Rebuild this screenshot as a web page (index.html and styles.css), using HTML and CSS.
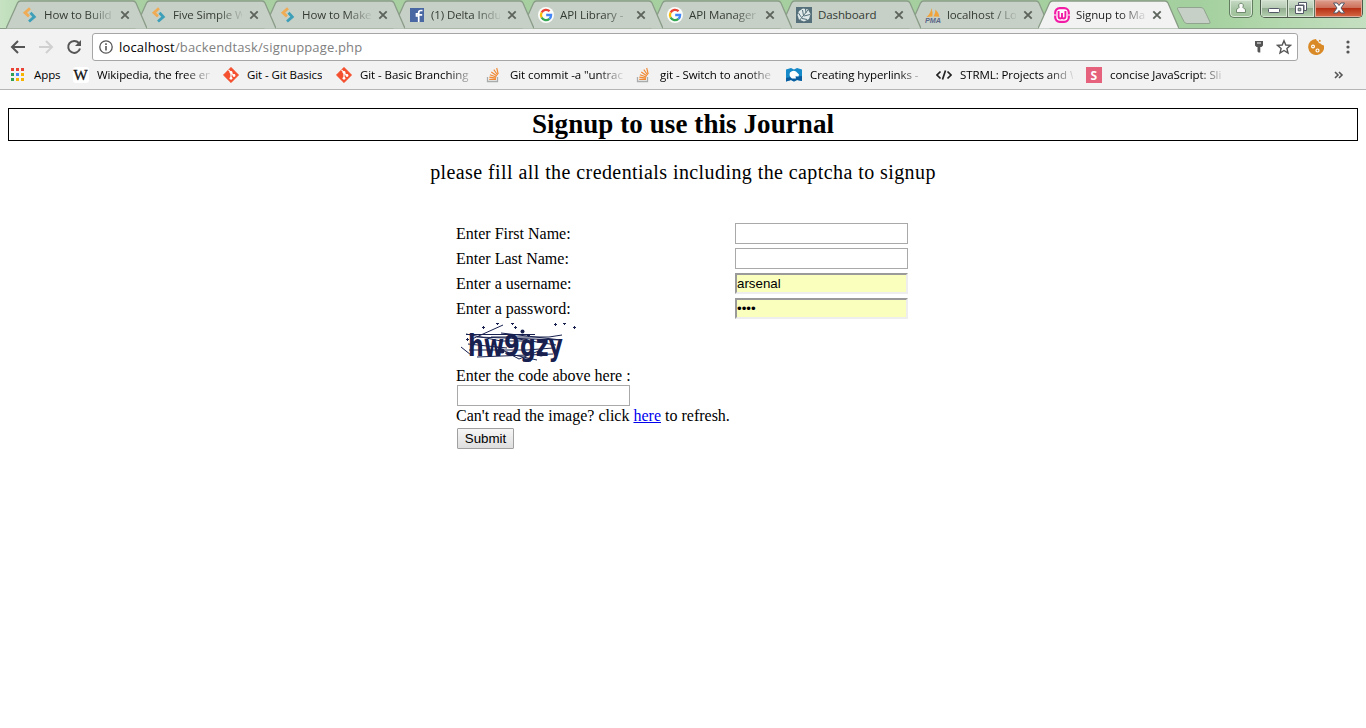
FILE: index.html
```html
<!DOCTYPE html>
<html lang="en">
<head>
<meta charset="utf-8">
<title>Signup to My Journal</title>
<link rel="stylesheet" href="styles.css">
</head>
<body>
<svg class="defs" width="0" height="0" aria-hidden="true">
  <symbol id="tab" viewBox="0 0 141 29"><path d="M0 28.500L11.500 3Q12.500 1 14.500 1H127Q129 1 130 3L141 28.500"/></symbol>
  <symbol id="x" viewBox="0 0 10 10"><path d="M1.300 1.300L8.700 8.700M8.700 1.300L1.300 8.700" stroke="currentColor" stroke-width="1.900"/></symbol>
  <symbol id="sp" viewBox="0 0 16 16"><path d="M8 1.300L3 5.800L7 9.400" fill="none" stroke="#efac54" stroke-width="2.800"/><path d="M8.500 5.800L12.300 9.800L7 14.500" fill="none" stroke="#3e9fb8" stroke-width="2.800"/></symbol>
  <symbol id="google" viewBox="0 0 16 16"><circle cx="8" cy="8" r="8" fill="#fbfdfb"/><g fill="none" stroke-width="2.300"><path d="M11.600 4.200A5.100 5.100 0 0 0 3.600 5.500" stroke="#ea4335"/><path d="M3.600 5.500A5.100 5.100 0 0 0 3.600 10.500" stroke="#fbbc05"/><path d="M3.600 10.500A5.100 5.100 0 0 0 11.400 11.900" stroke="#34a853"/><path d="M11.400 11.900A5.100 5.100 0 0 0 13.100 8H8.200" stroke="#4285f4"/></g></symbol>
  <symbol id="git" viewBox="0 0 16 16"><path d="M8 .3L15.700 8L8 15.700L.3 8Z" fill="#f4502f" stroke="#f4502f" stroke-linejoin="round" stroke-width=".6"/><path d="M5.500 2.800L8 5.400V11M8 5.800L10.800 8.400" fill="none" stroke="#fff" stroke-width="1.200"/><g fill="#fff"><circle cx="8" cy="5.300" r="1.400"/><circle cx="8" cy="11.300" r="1.400"/><circle cx="11" cy="8.500" r="1.400"/></g></symbol>
  <symbol id="so" viewBox="0 0 16 16"><path d="M1.500 10V14.500H11.500V10" fill="none" stroke="#a9abad" stroke-width="1.300"/><path d="M3.200 12.400H10M3.300 10.200L10 11.200M3.900 7.700L10.300 10M5.300 4.900L11 9M7.800 2.600L11.600 8M10.700 1L12.200 7.200" stroke="#f08a35" stroke-width="1.200"/></symbol>
</svg>

<header class="browser">
  <div class="tabstrip">
    <div class="tabs">
      <div class="tab"><svg class="shape"><use href="#tab"/></svg><svg class="fav"><use href="#sp"/></svg><span class="title">How to Build</span><svg class="close"><use href="#x"/></svg></div>
      <div class="tab"><svg class="shape"><use href="#tab"/></svg><svg class="fav"><use href="#sp"/></svg><span class="title">Five Simple W</span><svg class="close"><use href="#x"/></svg></div>
      <div class="tab"><svg class="shape"><use href="#tab"/></svg><svg class="fav"><use href="#sp"/></svg><span class="title">How to Make</span><svg class="close"><use href="#x"/></svg></div>
      <div class="tab"><svg class="shape"><use href="#tab"/></svg><svg class="fav" viewBox="0 0 16 16"><path d="M1 1H15V15H1Z" fill="#4867a3"/><path d="M9.700 15V9H7.500V6.900H9.700V5.500Q9.700 3.500 12 3.500H13.500M9 7.900H13.200" fill="none" stroke="#fff" stroke-width="1.700"/></svg><span class="title">(1) Delta Indu</span><svg class="close"><use href="#x"/></svg></div>
      <div class="tab"><svg class="shape"><use href="#tab"/></svg><svg class="fav"><use href="#google"/></svg><span class="title">API Library -</span><svg class="close"><use href="#x"/></svg></div>
      <div class="tab"><svg class="shape"><use href="#tab"/></svg><svg class="fav"><use href="#google"/></svg><span class="title">API Manager</span><svg class="close"><use href="#x"/></svg></div>
      <div class="tab"><svg class="shape"><use href="#tab"/></svg><svg class="fav" viewBox="0 0 16 16"><path d="M0 0H16V16H0Z" fill="#55707a"/><path d="M3 4L7 1.500L12 2.500L14.500 7L13 12L8 14.500L3 12.500L1.500 8Z" fill="#e1eaea"/><path d="M3 14L12 3M7.500 8.500L6.500 3M5.500 10.500L2.500 6M8 9L14 7.500M6 11.500L11 12.500M10 6L9.500 2" stroke="#55707a" stroke-width="1"/></svg><span class="title">Dashboard</span><svg class="close"><use href="#x"/></svg></div>
      <div class="tab"><svg class="shape"><use href="#tab"/></svg><svg class="fav pma" viewBox="0 0 16 16"><path d="M1.500 10Q5.500 7 6.500 1Q8 6 7.500 9.500ZM8.500 9.500Q10.500 6.500 10.500 2.500Q14 6 14.500 9.700Z" fill="#f0a33b"/><text x="0" y="15.800" textLength="16" lengthAdjust="spacingAndGlyphs">PMA</text></svg><span class="title">localhost / Lo</span><svg class="close"><use href="#x"/></svg></div>
      <div class="tab active"><svg class="shape"><use href="#tab"/></svg><svg class="fav" viewBox="0 0 16 16"><rect x="1.200" y="1.200" width="13.600" height="13.600" rx="4.500" fill="#fff" stroke="#f21ba5" stroke-width="2.200"/><path d="M4.600 4V9.500Q4.600 11.500 6.300 11.500Q8 11.500 8 9.500V6V9.500Q8 11.500 9.700 11.500Q11.400 11.500 11.400 9.500V4" fill="none" stroke="#f21ba5" stroke-width="1.900"/><path d="M0 8H2M14 8H16" stroke="#fff"/></svg><span class="title">Signup to Ma</span><svg class="close"><use href="#x"/></svg></div>
    </div>
    <svg class="newtab" width="38" height="20" viewBox="0 0 38 20"><path d="M3.500 1.500H26Q28 1.500 29 3.500L35 16Q35.500 17.500 34 17.500H12Q10 17.500 9 15.500L2.500 3Q2.200 1.500 3.500 1.500Z" fill="#c7d0c7" stroke="#90a48e"/></svg>
    <div class="profile"><svg width="12" height="12" viewBox="0 0 12 12"><path d="M6 1.200A2.300 2.500 0 0 1 7.800 5.300Q8.300 6.300 10.500 7.300V10.500H1.500V7.300Q3.700 6.300 4.200 5.300A2.300 2.500 0 0 1 6 1.200Z" fill="#fafafa" stroke="#6f8a6c"/></svg></div>
    <div class="winbtns">
      <span class="wb min"><svg width="14" height="8" viewBox="0 0 14 8"><rect x="1.500" y="2.500" width="11" height="4" rx="1" fill="#fff" stroke="#535766"/></svg></span>
      <span class="wb max"><svg width="14" height="14" viewBox="0 0 14 14"><path d="M4.500 1.500H12.500V9.500H10V4H4.500Z" fill="#fff" stroke="#535766"/><path d="M1.500 4.500H9.500V12.500H1.500Z" fill="#fff" stroke="#535766"/><path d="M4.200 7.200H6.800V9.800H4.200Z" fill="#a9c6a6" stroke="#535766"/></svg></span>
      <span class="wb end"><svg width="14" height="12" viewBox="0 0 14 12"><path d="M1.500 1H5L7 3.500L9 1H12.500L9 6L12.500 11H9L7 8.500L5 11H1.500L5 6Z" fill="#fff" stroke="#535766"/></svg></span>
    </div>
  </div>

  <div class="navbar">
    <svg class="back" width="16" height="16" viewBox="0 0 16 16"><path d="M15 8H2.500M8 2L2 8L8 14" fill="none" stroke="#555" stroke-width="2"/></svg>
    <svg class="fwd" width="16" height="16" viewBox="0 0 16 16"><path d="M1 8H13.500M8 2L14 8L8 14" fill="none" stroke="#d0d0d0" stroke-width="2"/></svg>
    <svg class="reload" width="16" height="16" viewBox="0 0 16 16"><path d="M12.800 4A6 6 0 1 0 14 9.500" fill="none" stroke="#555" stroke-width="2"/><path d="M15 1V7H9Z" fill="#555"/></svg>
    <div class="omnibox">
      <svg width="14" height="14" viewBox="0 0 14 14"><circle cx="7" cy="7" r="6.200" fill="none" stroke="#555" stroke-width="1.300"/><path d="M7 6V10.500M7 3.300V4.900" stroke="#555" stroke-width="1.600"/></svg>
      <span class="url">localhost<span class="path">/backendtask/signuppage.php</span></span>
      <svg class="key" width="10" height="14" viewBox="0 0 10 14"><path d="M1 1H9V5.500L7.500 7H6.300V12.500H4.500L3.500 11.500V7H2.500L1 5.500Z" fill="#555"/><path d="M3 3H7" stroke="#fff"/></svg>
      <svg class="star" width="16" height="16" viewBox="0 0 16 16"><path d="M8 1.700L9.800 6L14.500 6.400L10.900 9.400L12 14L8 11.500L4 14L5.100 9.400L1.500 6.400L6.200 6Z" fill="none" stroke="#555" stroke-width="1.400"/></svg>
    </div>
    <svg class="cookie" width="16" height="16" viewBox="0 0 16 16"><path d="M8 0Q8.500 2 10 2.200Q10.500 4.500 12.500 4.500Q13.500 6 16 6.500A8 8 0 1 1 8 0Z" fill="#d98a26"/><path d="M11 .7L12.800 1.300L12.300 3L10.800 2.500Z" fill="#d98a26"/><g fill="#d98a26" stroke="#fff" stroke-width="1.200"><circle cx="5" cy="7.500" r="1.400"/><circle cx="9.500" cy="11.500" r="1.500"/></g></svg>
    <svg class="menu" width="4" height="14" viewBox="0 0 4 14"><g fill="#555"><circle cx="2" cy="2" r="1.600"/><circle cx="2" cy="7" r="1.600"/><circle cx="2" cy="12" r="1.600"/></g></svg>
  </div>

  <nav class="bookmarks">
    <a class="bm apps"><svg viewBox="0 0 16 16"><path d="M1 1h3v3h-3zM6 1h3v3h-3zM11 1h3v3h-3z" fill="#ea4335"/><path d="M1 6h3v3h-3zM1 11h3v3h-3z" fill="#2fa052"/><path d="M6 6h3v3h-3z" fill="#4285f4"/><path d="M11 6h3v3h-3zM6 11h3v3h-3zM11 11h3v3h-3z" fill="#f6b400"/></svg><span>Apps</span></a>
    <a class="bm wiki"><svg viewBox="0 0 16 16"><rect width="16" height="16" rx="3" fill="#fff"/><text x=".5" y="13" textLength="15" class="w">W</text></svg><span class="fade">Wikipedia, the free en</span></a>
    <a class="bm basics"><svg><use href="#git"/></svg><span>Git - Git Basics</span></a>
    <a class="bm branch"><svg><use href="#git"/></svg><span class="fade">Git - Basic Branching</span></a>
    <a class="bm so"><svg><use href="#so"/></svg><span class="fade">Git commit -a "untrac</span></a>
    <a class="bm so"><svg><use href="#so"/></svg><span class="fade">git - Switch to anothe</span></a>
    <a class="bm so"><svg viewBox="0 0 16 16"><path d="M0 2.500L5 1L8 2.500L11 1L16 2.500V14L11 13L8 14.500L5 13L0 14.500Z" fill="#168ac8"/><path d="M0 11L5 10L16 9V14L11 13L8 14.500L5 13L0 14.500Z" fill="#095c9e"/><path d="M4 5.500Q7 2.500 10 4.500L13 7.500L12.500 9.500L9.500 9.300L10 11.500L6 11.500Q2.500 9 4 5.500Z" fill="#fff"/></svg><span class="fade">Creating hyperlinks -</span></a>
    <a class="bm so"><svg viewBox="0 0 16 16"><path d="M4.500 4.500L1 8L4.500 11.500M11.500 4.500L15 8L11.500 11.500M9.500 3.500L6.500 12.500" fill="none" stroke="#222" stroke-width="1.700"/></svg><span class="fade">STRML: Projects and W</span></a>
    <a class="bm js"><svg viewBox="0 0 16 16"><path d="M0 0H16V16H0Z" fill="#e5617c"/><text x="4.500" y="12.500" class="s">S</text></svg><span class="fade">concise JavaScript: Sli</span></a>
    <svg class="more" width="10" height="8" viewBox="0 0 10 8"><path d="M1 1L4 4L1 7M5 1L8 4L5 7" fill="none" stroke="#555" stroke-width="1.600"/></svg>
  </nav>
</header>

<main class="page">
  <h1>Signup to use this Journal</h1>
  <p class="lead"><span>please fill all the credentials including the captcha to signup</span></p>
  <form class="signup">
    <div class="row"><label>Enter First Name:</label><input type="text"></div>
    <div class="row"><label>Enter Last Name:</label><input type="text"></div>
    <div class="row"><label>Enter a username:</label><input class="filled" type="text" value="arsenal"></div>
    <div class="row"><label>Enter a password:</label><input class="filled" type="password" value="pass"></div>
    <svg class="captcha" width="120" height="40" viewBox="0 0 120 40">
      <text x="11" y="33" textLength="95" lengthAdjust="spacingAndGlyphs">hw<tspan class="nine">9</tspan>gzy</text>
      <g fill="none" stroke="#17204f" stroke-width="1">
        <path d="M15 16L46 2M9 11.500H78M20 14L104 17L44 10M34 14L92 14L105 12M4 24L14 32M11 21L50 25M12 27H70L96 25M20 34L96 31M48 30L80 37M40 24L62 36L84 27M55 15L99 22M9 11L44 18L70 18M66 38H74"/>
      </g>
      <g fill="#17204f"><path d="M26 3h1v1h1v1h-1v1h-1v-1h-1v-1h1zM39 0h3v1h-1v1h-1v-1h-1zM54 0h3v1h-1v1h-1v-1h-1zM58 3h1v1h1v1h-1v1h-1v-1h-1v-1h1zM98 0h1v1h1v1h-1v1h-1v-1h-1v-1h1zM106 0h3v1h-1v1h-1v-1h-1zM117 3h1v1h1v1h-1v1h-1v-1h-1v-1h1zM71 11h1v1h1v1h-1v1h-1v-1h-1v-1h1zM10 15h1v1h1v1h-1v1h-1v-1h-1v-1h1z"/><circle cx="65.500" cy="8.500" r="2"/><circle cx="84" cy="31" r="2.500"/><circle cx="45" cy="28" r="2.500"/></g>
    </svg>
    <label class="code">Enter the code above here :</label>
    <input type="text">
    <p class="refresh">Can't read the image? click <a href="#">here</a> to refresh.</p>
    <button type="button">Submit</button>
  </form>
</main>
</body>
</html>
```
FILE: styles.css
```css
* { box-sizing: border-box; }
body { margin: 0; height: 728px; overflow: hidden; background: #fff; color: #000; font-family: "Liberation Serif", serif; }
svg { display: block; flex: none; }
.defs { position: absolute; }

.browser { height: 90px; background: #f2f2f2; border-bottom: 1px solid #b6b4b6; font-family: "Open Sans", sans-serif; font-size: 11.5px; }

.tabstrip { position: relative; display: flex; height: 29px; padding-left: 6px; background: linear-gradient(90deg, #c6e2c2 0, #a9d0a2 60px, #a4cf9e 1200px, #a9d3a3 1230px, #c5dfc1 1366px); border-bottom: 1px solid #8a9d88; }
.tabs { display: flex; height: 29px; width: 1173px; }
.tab { position: relative; display: flex; align-items: center; flex: none; width: 141px; height: 29px; margin-right: -12px; padding: 0 0 0 16px; color: #343b34; z-index: 1; }
.tab:nth-child(1) { z-index: 8; }
.tab:nth-child(2) { z-index: 7; }
.tab:nth-child(3) { z-index: 6; }
.tab:nth-child(4) { z-index: 5; }
.tab:nth-child(5) { z-index: 4; }
.tab:nth-child(6) { z-index: 3; }
.tab:nth-child(7) { z-index: 2; }
.shape { position: absolute; left: 0; top: 0; width: 141px; height: 29px; fill: #c7d0c7; stroke: #8a9d88; stroke-width: 1.3; }
.tab.active { z-index: 9; color: #222; }
.tab.active .shape { fill: #f2f2f2; stroke: #889c85; }
.fav { position: relative; width: 16px; height: 16px; margin-top: 1px; }
.title { position: relative; width: 69px; margin-left: 6px; overflow: hidden; white-space: nowrap; line-height: 20px; letter-spacing: -0.1px; -webkit-mask-image: linear-gradient(90deg, #000 44px, transparent 72px); mask-image: linear-gradient(90deg, #000 44px, transparent 72px); }
.tab:nth-child(7) .title { -webkit-mask-image: none; mask-image: none; }
.close { position: relative; width: 10px; height: 10px; margin-left: 7px; color: #5c645c; }
.pma text { font: italic bold 7px "Liberation Sans", sans-serif; fill: #5b6789; }
.newtab { margin: 6px 0 0 -4px; }
.profile { display: flex; justify-content: center; width: 24px; height: 18px; margin-left: 16px; padding-top: 2px; border: 1px solid #627d60; border-top: 0; border-radius: 0 0 5px 5px; background: linear-gradient(#c8dbc6, #a9c6a6 50%, #9fc399); box-shadow: inset 0 0 0 1px #dbe9d9; }
.winbtns { display: flex; height: 18px; width: 103px; margin-left: 7px; border: 1px solid #4c5a4b; border-top: 0; border-radius: 0 0 5px 5px; overflow: hidden; }
.wb { display: flex; align-items: center; justify-content: center; width: 27px; background: linear-gradient(#d0dfce, #b8cdb5 45%, #8fa98c 46%, #b4d2b0); border-right: 1px solid #5f705d; box-shadow: inset 0 0 0 1px #d5e4d3; }
.wb svg { margin-top: -2px; }
.wb.min svg { margin-top: 3px; }
.wb.end { width: 47px; border: 0; background: linear-gradient(#dfa08f, #cc705b 45%, #b52c12 46%, #d66a48); box-shadow: inset 0 0 0 1px #e3a899; }

.navbar { display: flex; align-items: center; height: 33px; padding: 4px 14px 1px 10px; }
.fwd { margin-left: 12px; }
.reload { margin-left: 12px; }
.omnibox { display: flex; align-items: center; width: 1206px; height: 28px; margin-left: 10px; padding: 0 5px 0 6px; background: #fff; border: 1px solid #a6a6a6; border-radius: 3px; }
.url { margin-left: 6px; flex: 1; font-size: 13px; letter-spacing: 0.16px; color: #000; }
.path { color: #808080; }
.star { margin-left: 12px; }
.cookie { margin-left: 10px; }
.menu { margin-left: 22px; }

.bookmarks { display: flex; align-items: center; height: 27px; padding: 0 22px 2px 10px; color: #000; letter-spacing: -0.08px; }
.bm { display: flex; align-items: center; flex: none; }
.bm svg { width: 16px; height: 16px; }
.bm span { margin-left: 8px; white-space: nowrap; overflow: hidden; line-height: 18px; }
.bm .fade { width: 113px; -webkit-mask-image: linear-gradient(90deg, #000 88px, transparent 116px); mask-image: linear-gradient(90deg, #000 88px, transparent 116px); }
.apps { width: 63px; }
.wiki { width: 150px; }
.basics { width: 113px; }
.branch { width: 150px; }
.so { width: 150px; }
.js { width: 137px; }
.more { margin-left: auto; }
.w { font: 15px "Liberation Serif", serif; fill: #111; stroke: #111; stroke-width: 0.3px; }
.s { font: bold 12px "Open Sans", sans-serif; fill: #fff; }

.page { padding: 18px 8px 0; }
h1 { margin: 0; height: 33px; border: 1px solid #000; text-align: center; font-size: 27px; line-height: 31px; letter-spacing: 0.08px; }
.lead { margin: 19px 0 0; text-align: center; font-size: 20px; line-height: 24px; letter-spacing: 0.42px; }
.signup { display: flex; flex-direction: column; align-items: flex-start; width: 452px; margin: 39px 0 0 449px; font-size: 16px; }
.row { display: flex; align-items: center; justify-content: space-between; width: 451px; height: 21px; margin-bottom: 4px; }
label, .refresh { margin-left: -1px; white-space: nowrap; }
input { width: 173px; height: 21px; margin: 0; padding: 1px; border: 1px solid #a9a9a9; background: #fff; font: 13.33px "Liberation Sans", Arial, sans-serif; }
.filled { padding: 0; border: 2px solid; border-color: #9a9a9a #eee #eee #9a9a9a; background: #faffbd; }
.captcha { overflow: visible; }
.captcha text { font: bold 30px "DejaVu Sans Condensed", "DejaVu Sans", sans-serif; fill: #17204f; }
.captcha .nine { font-size: 31px; }
.code { height: 22px; padding-top: 4px; line-height: 18px; }
.refresh { margin-top: 0; margin-bottom: 0; height: 22px; line-height: 19px; }
.refresh a { color: #00e; }
button { width: 57px; height: 21px; padding: 0; border: 1px solid #a0a0a0; border-radius: 1px; background: linear-gradient(#f6f6f6, #dedede); font: 13.33px "Liberation Sans", Arial, sans-serif; }
```
